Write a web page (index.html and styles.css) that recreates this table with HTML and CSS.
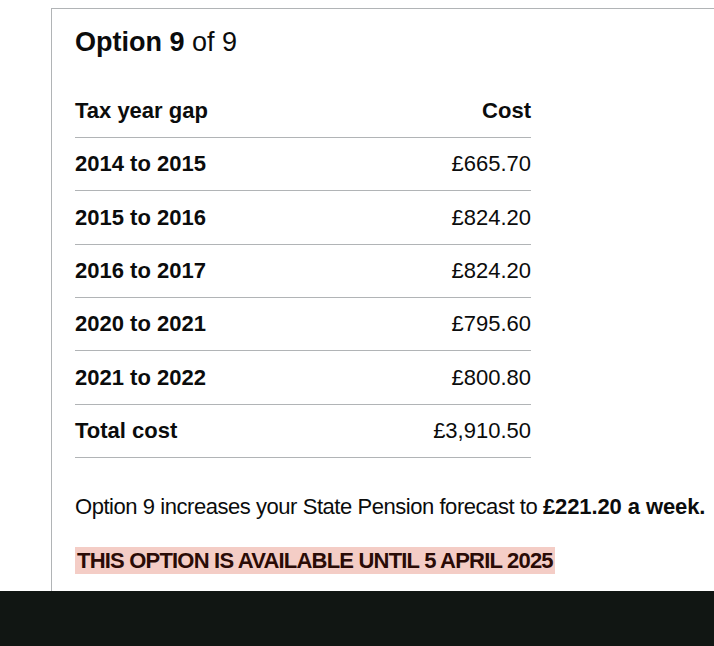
FILE: index.html
```html
<!DOCTYPE html>
<html lang="en">
<head>
<meta charset="utf-8">
<title>Option 9 of 9</title>
<link rel="stylesheet" href="styles.css">
</head>
<body>
<main class="page">
  <section class="card">
    <h2 class="card-title"><strong>Option 9</strong> of 9</h2>
    <table class="gap-table">
      <thead>
        <tr>
          <th class="col-year">Tax year gap</th>
          <th class="col-cost">Cost</th>
        </tr>
      </thead>
      <tbody>
        <tr><th class="col-year">2014 to 2015</th><td class="col-cost">£665.70</td></tr>
        <tr><th class="col-year">2015 to 2016</th><td class="col-cost">£824.20</td></tr>
        <tr><th class="col-year">2016 to 2017</th><td class="col-cost">£824.20</td></tr>
        <tr><th class="col-year">2020 to 2021</th><td class="col-cost">£795.60</td></tr>
        <tr><th class="col-year">2021 to 2022</th><td class="col-cost">£800.80</td></tr>
        <tr><th class="col-year">Total cost</th><td class="col-cost">£3,910.50</td></tr>
      </tbody>
    </table>
    <p class="forecast">Option 9 increases your State Pension forecast to <strong>£221.20 a week.</strong></p>
    <div class="deadline"><span class="tag">This option is available until 5 April 2025</span></div>
  </section>
</main>
<footer class="footer"></footer>
</body>
</html>
```

FILE: styles.css
```css
html {
  overflow: hidden;
}

body {
  margin: 0;
  background: #ffffff;
  color: #0b0c0c;
  font-family: "Liberation Sans", Arial, sans-serif;
  font-size: 22px;
  line-height: 29.33px;
}

.page {
  padding: 8px 0 0 51px;
}

.card {
  border: 1px solid #b1b4b6;
  border-right: 0;
  border-bottom: 0;
  padding: 17px 0 18px 23px;
}

.card-title {
  margin: 0 0 26.67px 0;
  font-size: 27px;
  line-height: 32px;
  font-weight: 400;
}

.card-title strong {
  font-weight: 700;
}

.gap-table {
  width: 456px;
  border-collapse: collapse;
  border-spacing: 0;
  margin: 0 0 34px 0;
}

.gap-table th,
.gap-table td {
  padding: 11.5px 0;
  border-bottom: 1px solid #b1b4b6;
  text-align: left;
  vertical-align: top;
}

.gap-table th {
  font-weight: 700;
}

.gap-table .col-cost {
  text-align: right;
}

.gap-table td.col-cost {
  font-weight: 400;
}

.forecast {
  margin: 0 0 24.3px 0;
  white-space: nowrap;
  letter-spacing: -0.45px;
}

.forecast strong {
  font-weight: 700;
  letter-spacing: -0.1px;
}

.deadline {
  height: 27px;
}

.tag {
  display: inline-block;
  padding: 0 2px;
  line-height: 27px;
  background: #f4cdc6;
  color: #2a0b06;
  font-weight: 700;
  text-transform: uppercase;
  letter-spacing: -0.8px;
  white-space: nowrap;
}

.footer {
  height: 60px;
  background: #111613;
}
```
